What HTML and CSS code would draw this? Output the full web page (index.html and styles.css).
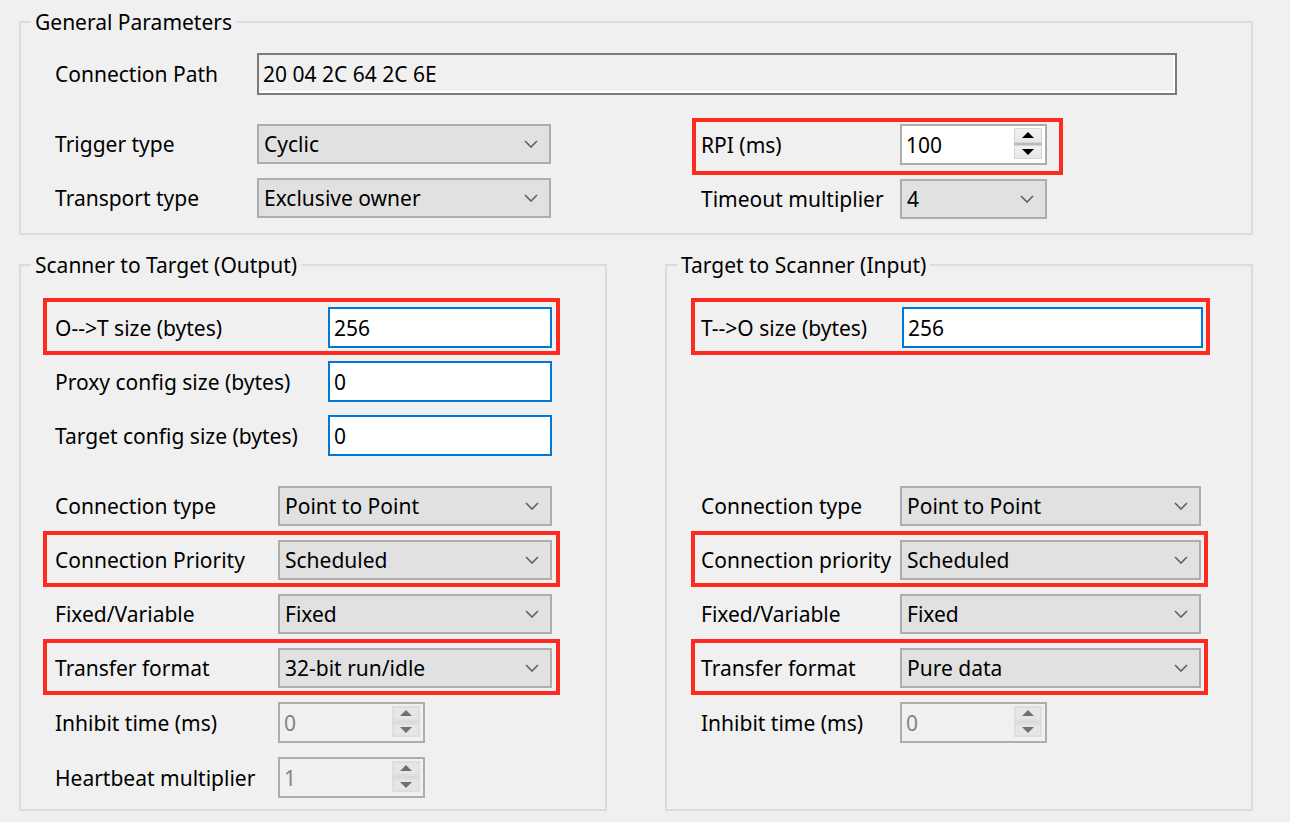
FILE: index.html
```html
<!DOCTYPE html>
<html lang="en">
<head>
  <meta charset="UTF-8">
  <title>Connection Parameters</title>
  <link rel="stylesheet" href="styles.css">
</head>
<body>
  <div class="dialog">
    <!-- General -->
    <fieldset class="group group-general">
      <legend>General Parameters</legend>
      <div class="group-body">
        <div class="row row-path">
          <label class="lbl">Connection Path</label>
          <div class="textbox readonly">20 04 2C 64 2C 6E</div>
        </div>
        <div class="gp-cols">
          <div class="gp-col gp-left">
            <div class="row">
              <label class="lbl">Trigger type</label>
              <div class="combo"><span>Cyclic</span><svg class="chev" width="14" height="8" viewBox="0 0 14 8"><path d="M1 1l6 6 6-6" /></svg></div>
            </div>
            <div class="row">
              <label class="lbl">Transport type</label>
              <div class="combo"><span>Exclusive owner</span><svg class="chev" width="14" height="8" viewBox="0 0 14 8"><path d="M1 1l6 6 6-6" /></svg></div>
            </div>
          </div>
          <div class="gp-col gp-right">
            <div class="row mark mark-rpi">
              <label class="lbl">RPI (ms)</label>
              <div class="spin">
                <span class="spin-value">100</span>
                <span class="spin-btns"><span class="spin-btn"><i class="tri-up"></i></span><span class="spin-btn"><i class="tri-down"></i></span></span>
              </div>
            </div>
            <div class="row">
              <label class="lbl">Timeout multiplier</label>
              <div class="combo"><span>4</span><svg class="chev" width="14" height="8" viewBox="0 0 14 8"><path d="M1 1l6 6 6-6" /></svg></div>
            </div>
          </div>
        </div>
      </div>
    </fieldset>

    <div class="io-groups">
      <!-- Output -->
      <fieldset class="group group-io group-out">
        <legend>Scanner to Target (Output)</legend>
        <div class="group-body">
          <div class="sizes">
            <div class="row mark">
              <label class="lbl">O--&gt;T size (bytes)</label>
              <div class="textbox">256</div>
            </div>
            <div class="row">
              <label class="lbl">Proxy config size (bytes)</label>
              <div class="textbox">0</div>
            </div>
            <div class="row">
              <label class="lbl">Target config size (bytes)</label>
              <div class="textbox">0</div>
            </div>
          </div>
          <div class="options">
            <div class="row">
              <label class="lbl">Connection type</label>
              <div class="combo"><span>Point to Point</span><svg class="chev" width="14" height="8" viewBox="0 0 14 8"><path d="M1 1l6 6 6-6" /></svg></div>
            </div>
            <div class="row mark">
              <label class="lbl">Connection Priority</label>
              <div class="combo"><span>Scheduled</span><svg class="chev" width="14" height="8" viewBox="0 0 14 8"><path d="M1 1l6 6 6-6" /></svg></div>
            </div>
            <div class="row">
              <label class="lbl">Fixed/Variable</label>
              <div class="combo"><span>Fixed</span><svg class="chev" width="14" height="8" viewBox="0 0 14 8"><path d="M1 1l6 6 6-6" /></svg></div>
            </div>
            <div class="row mark">
              <label class="lbl">Transfer format</label>
              <div class="combo"><span>32-bit run/idle</span><svg class="chev" width="14" height="8" viewBox="0 0 14 8"><path d="M1 1l6 6 6-6" /></svg></div>
            </div>
            <div class="row">
              <label class="lbl">Inhibit time (ms)</label>
              <div class="spin disabled">
                <span class="spin-value">0</span>
                <span class="spin-btns"><span class="spin-btn"><i class="tri-up"></i></span><span class="spin-btn"><i class="tri-down"></i></span></span>
              </div>
            </div>
            <div class="row">
              <label class="lbl">Heartbeat multiplier</label>
              <div class="spin disabled">
                <span class="spin-value">1</span>
                <span class="spin-btns"><span class="spin-btn"><i class="tri-up"></i></span><span class="spin-btn"><i class="tri-down"></i></span></span>
              </div>
            </div>
          </div>
        </div>
      </fieldset>

      <!-- Input -->
      <fieldset class="group group-io group-in">
        <legend>Target to Scanner (Input)</legend>
        <div class="group-body">
          <div class="sizes">
            <div class="row mark">
              <label class="lbl">T--&gt;O size (bytes)</label>
              <div class="textbox">256</div>
            </div>
          </div>
          <div class="options">
            <div class="row">
              <label class="lbl">Connection type</label>
              <div class="combo"><span>Point to Point</span><svg class="chev" width="14" height="8" viewBox="0 0 14 8"><path d="M1 1l6 6 6-6" /></svg></div>
            </div>
            <div class="row mark">
              <label class="lbl">Connection priority</label>
              <div class="combo"><span>Scheduled</span><svg class="chev" width="14" height="8" viewBox="0 0 14 8"><path d="M1 1l6 6 6-6" /></svg></div>
            </div>
            <div class="row">
              <label class="lbl">Fixed/Variable</label>
              <div class="combo"><span>Fixed</span><svg class="chev" width="14" height="8" viewBox="0 0 14 8"><path d="M1 1l6 6 6-6" /></svg></div>
            </div>
            <div class="row mark">
              <label class="lbl">Transfer format</label>
              <div class="combo"><span>Pure data</span><svg class="chev" width="14" height="8" viewBox="0 0 14 8"><path d="M1 1l6 6 6-6" /></svg></div>
            </div>
            <div class="row">
              <label class="lbl">Inhibit time (ms)</label>
              <div class="spin disabled">
                <span class="spin-value">0</span>
                <span class="spin-btns"><span class="spin-btn"><i class="tri-up"></i></span><span class="spin-btn"><i class="tri-down"></i></span></span>
              </div>
            </div>
          </div>
        </div>
      </fieldset>
    </div>
  </div>
</body>
</html>
```

FILE: styles.css
```css
body {
  margin: 0;
  padding: 0;
  width: 1290px;
  height: 822px;
  overflow: hidden;
  background: #f0f0f0;
  font-family: "Noto Sans", "Open Sans", sans-serif;
  font-size: 21px;
  color: #000;
}

.dialog {
  padding: 9px 0 0 19px;
}

/* group boxes */
.group {
  margin: 0;
  padding: 0;
  min-width: 0;
  border: 2px solid #dcdcdc;
  box-sizing: border-box;
}

.group legend {
  margin-left: 10px;
  padding: 0 4px;
  line-height: 26px;
}

.group-general {
  width: 1234px;
}

.group-general .group-body {
  padding: 18px 0 14px 34px;
}

.io-groups {
  display: flex;
  gap: 58px;
  margin-top: 17px;
}

.group-io {
  width: 588px;
}

.group-io .group-body {
  padding: 29px 0 11px 34px;
}

/* rows */
.row {
  display: flex;
  align-items: center;
  position: relative;
}

.lbl {
  flex: none;
  white-space: nowrap;
}

.row-path .lbl {
  width: 202px;
}

.row-path .textbox {
  width: 920px;
  height: 42px;
}

.gp-cols {
  display: flex;
  gap: 150px;
  margin-top: 29px;
}

.gp-col {
  display: flex;
  flex-direction: column;
  align-items: flex-start;
  gap: 14px;
}

.gp-left .lbl {
  width: 202px;
}

.gp-left .combo {
  width: 294px;
}

.gp-right .lbl {
  width: 199px;
}

.gp-right .combo,
.gp-right .spin {
  width: 147px;
}

.sizes {
  display: flex;
  flex-direction: column;
  align-items: flex-start;
  gap: 13px;
}

.options {
  display: flex;
  flex-direction: column;
  align-items: flex-start;
  gap: 14px;
  margin-top: 30px;
}

.group-in .options {
  margin-top: 138px;
}

.group-out .sizes .lbl {
  width: 273px;
}

.group-out .sizes .textbox {
  width: 224px;
}

.group-out .options .lbl {
  width: 223px;
}

.group-out .combo {
  width: 274px;
}

.group-out .spin {
  width: 147px;
}

.group-in .sizes .lbl {
  width: 201px;
}

.group-in .sizes .textbox {
  width: 301px;
}

.group-in .options .lbl {
  width: 199px;
}

.group-in .combo {
  width: 301px;
}

.group-in .spin {
  width: 147px;
}

/* controls */
.textbox {
  box-sizing: border-box;
  height: 41px;
  padding: 0 4px;
  display: flex;
  align-items: center;
  background: #fff;
  border: 2px solid #0078d7;
}

.textbox.readonly {
  background: #f0f0f0;
  border-color: #7a7a7a;
  box-shadow: inset -2px -2px 0 #fff;
}

.combo {
  box-sizing: border-box;
  height: 40px;
  padding: 0 11px 0 5px;
  display: flex;
  align-items: center;
  background: #e1e1e1;
  border: 2px solid #adadad;
}

.chev {
  margin-left: auto;
  flex: none;
}

.chev path {
  fill: none;
  stroke: #606060;
  stroke-width: 1.6;
}

.spin {
  box-sizing: border-box;
  height: 41px;
  padding: 0 0 0 4px;
  display: flex;
  align-items: center;
  background: #fff;
  border: 2px solid #adadad;
}

.spin-btns {
  margin: 2px 3px 4px auto;
  align-self: stretch;
  width: 28px;
  display: flex;
  flex-direction: column;
  gap: 2px;
  background: #b9b9b9;
}

.spin-btn {
  flex: 1;
  display: flex;
  align-items: center;
  justify-content: center;
  background: linear-gradient(#f3f3f3, #e6e6e6);
  box-shadow: inset 0 0 0 1px #d6d6d6;
}

.tri-up,
.tri-down {
  width: 0;
  height: 0;
  border-left: 6px solid transparent;
  border-right: 6px solid transparent;
}

.tri-up {
  border-bottom: 6px solid #000;
}

.tri-down {
  border-top: 6px solid #000;
}

.spin.disabled {
  background: #f0f0f0;
  color: #838383;
}

.spin.disabled .spin-btns {
  background: #dadada;
}

.spin.disabled .spin-btn {
  background: #e6e6e6;
  box-shadow: inset 0 0 0 2px #dedede;
}

.spin.disabled .tri-up {
  border-bottom-color: #707070;
}

.spin.disabled .tri-down {
  border-top-color: #707070;
}

/* red highlight boxes */
.mark::before {
  content: "";
  position: absolute;
  top: -9px;
  bottom: -7px;
  left: -12px;
  right: -8px;
  border: 4px solid #fd2b1f;
  pointer-events: none;
}

.group-in .mark::before {
  left: -10px;
  right: -7px;
}

.mark-rpi::before {
  top: -6px;
  bottom: -10px;
  left: -9px;
  right: -16px;
}
```
